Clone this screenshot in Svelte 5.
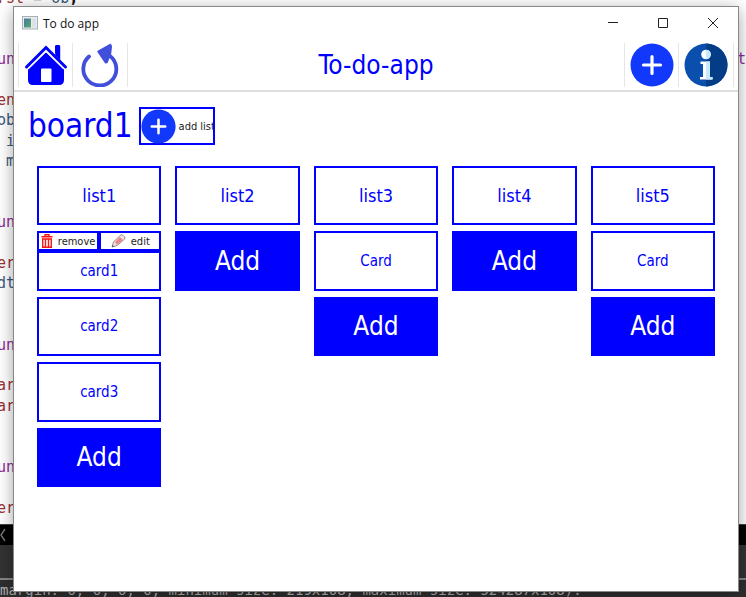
<script>
  const code = [
    { row: 1, text: 'rst = ob;', kind: 'mixed' },
    { row: 4, text: 'un', kind: 'keyword', tail: 't' },
    { row: 6, text: 'en', kind: 'name' },
    { row: 7, text: 'ob', kind: 'plain' },
    { row: 8, text: ' i', kind: 'plain' },
    { row: 9, text: ' m', kind: 'plain' },
    { row: 12, text: 'un', kind: 'keyword' },
    { row: 14, text: 'er', kind: 'name' },
    { row: 15, text: 'dt', kind: 'plain' },
    { row: 18, text: 'un', kind: 'keyword' },
    { row: 20, text: 'ar', kind: 'name' },
    { row: 21, text: 'ar', kind: 'name' },
    { row: 24, text: 'un', kind: 'keyword' },
    { row: 26, text: 'er', kind: 'name' }
  ];

  const lists = [
    { title: 'list1', cards: ['card1', 'card2', 'card3'] },
    { title: 'list2', cards: [] },
    { title: 'list3', cards: ['Card'] },
    { title: 'list4', cards: [] },
    { title: 'list5', cards: ['Card'] }
  ];

  let active = $state('card1');
</script>

{#snippet plus(size)}
  <svg width={size} height={size} viewBox="0 0 44 44" aria-hidden="true">
    <circle cx="22" cy="22" r="21.5" fill="#1238fb" />
    <path d="M22 13.500v17M13.500 22h17" stroke="#fff" stroke-width="3.2" stroke-linecap="round" />
  </svg>
{/snippet}

<div class="desktop">
  <div class="editor" aria-hidden="true">
    {#each code as line}
      <div class="line {line.kind}" style="grid-row: {line.row}">
        {#if line.kind === 'mixed'}
          <span><span class="name">rst</span> = ob<b>;</b></span>
        {:else}
          <span>{line.text}</span>
        {/if}
        {#if line.tail}<span>{line.tail}</span>{/if}
      </div>
    {/each}
  </div>
  <div class="scroll" aria-hidden="true">
    <svg width="6" height="16" viewBox="0 0 6 16"><path d="M5 2L1 8l4 6" fill="none" stroke="#777" stroke-width="1.4" /></svg>
  </div>
  <div class="gap"></div>
  <div class="console" aria-hidden="true">margin: 0, 0, 0, 0, minimum size: 219x108, maximum size: 524287x108).</div>

  <main class="window">
    <header class="titlebar">
      <svg width="16" height="14" viewBox="0 0 16 14" aria-hidden="true">
        <defs>
          <linearGradient id="screen" x1="0" y1="0" x2="1" y2="1">
            <stop offset="0" stop-color="#4a78a0" /><stop offset="1" stop-color="#55a86c" />
          </linearGradient>
        </defs>
        <rect x=".5" y=".5" width="15" height="12.5" fill="#e9edf0" stroke="#a9b0b5" />
        <rect x="2" y="2.5" width="7" height="9" fill="url(#screen)" />
        <rect x="10" y="2.5" width="4" height="9" fill="#dde2e5" />
      </svg>
      <span>To do app</span>
      <div class="controls">
        <button aria-label="Minimize"><svg width="12" height="12" viewBox="0 0 12 12"><path d="M1 5.5h10" /></svg></button>
        <button aria-label="Maximize"><svg width="12" height="12" viewBox="0 0 12 12"><path d="M1.5 1.5h9v9h-9z" /></svg></button>
        <button aria-label="Close"><svg width="12" height="12" viewBox="0 0 12 12"><path d="M1 1l10 10M11 1L1 11" /></svg></button>
      </div>
    </header>

    <nav class="toolbar">
      <button class="tool" aria-label="Home">
        <svg width="44" height="44" viewBox="0 0 44 44">
          <path d="M4 39V26.500L22 9l18 17.500V37q0 5-5 5H9q-5 0-5-5z" fill="#0000fe" />
          <path d="M31 13V3.500q0-1.500 1.500-1.500h2q1.500 0 1.500 1.500V17z" fill="#0000fe" />
          <path d="M2.500 24L22 5l19.500 19" fill="none" stroke="#fff" stroke-width="6" />
          <path d="M2.500 24L22 4.500 41.500 24" fill="none" stroke="#0000fe" stroke-width="3" stroke-linecap="round" />
          <path d="M31.200 12V3.500q0-1.500 1.500-1.500h2q1.500 0 1.500 1.500V17z" fill="#0000fe" />
          <rect x="17" y="25.500" width="10.500" height="13.500" rx="1" fill="#fff" />
        </svg>
      </button>
      <button class="tool" aria-label="Refresh">
        <svg width="44" height="44" viewBox="0 0 44 44">
          <path d="M11 13.500A16.500 16.500 0 1 0 32 13" fill="none" stroke="#424fdc" stroke-width="3.800" stroke-linecap="round" />
          <path d="M20 8.500L32.500 1.500l.8 2-.8 7-3.500 9-1.500.2z" fill="#424fdc" stroke="#424fdc" stroke-width="1.500" stroke-linejoin="round" />
        </svg>
      </button>
      <h1>To-do-app</h1>
      <button class="tool" aria-label="Add board">{@render plus(44)}</button>
      <button class="tool" aria-label="Information">
        <svg width="44" height="44" viewBox="0 0 44 44">
          <circle cx="22" cy="22" r="21.5" fill="#0a4fae" />
          <path d="M22 .5a21.500 21.500 0 0 1 0 43z" fill="#043c86" />
          <circle cx="22" cy="11.500" r="4.800" fill="#fff" />
          <path d="M22 6.700a4.800 4.800 0 0 1 0 9.600z" fill="#c8eaff" />
          <path d="M16.500 18.500H26V34h2.500v2.500H16V34h3V21h-2.500z" fill="#fff" />
          <path d="M22 18.500h4V34h2.500v2.500H22z" fill="#c8eaff" />
        </svg>
      </button>
    </nav>

    <section class="board">
      <div class="heading">
        <h2>board1</h2>
        <button class="add-list">{@render plus(35)}<span>add list</span></button>
      </div>
      <div class="lists">
        {#each lists as list}
          <div class="list">
            <button class="box title">{list.title}</button>
            {#each list.cards as card}
              {#if card === active}
                <div class="open">
                  <div class="actions">
                    <button>
                      <svg width="12" height="14" viewBox="0 0 12 14" aria-hidden="true">
                        <path d="M4 2V.8h4V2M.5 2.800h11M1.700 5v8.300h8.600V5zM4.500 5v8M7.500 5v8" fill="none" stroke="#fb1515" stroke-width="1.400" />
                      </svg>
                      <span>remove</span>
                    </button>
                    <button>
                      <svg width="15" height="14" viewBox="0 0 15 14" aria-hidden="true">
                        <path d="M1 13l1.500-5L9 1.500Q10.500 0 12 1.300l1.500 1.500q1 1.200 0 2.400L6 11.500z" fill="#f1e4e4" stroke="#8f8080" stroke-width=".9" />
                        <path d="M3.800 8.300l5-5.200 3 2.700-5.500 5z" fill="#ea858b" />
                        <path d="M1 13l.6-2 1.400 1.300z" fill="#444" />
                      </svg>
                      <span>edit</span>
                    </button>
                  </div>
                  <button class="box card">{card}</button>
                </div>
              {:else}
                <button class="box card" onclick={() => (active = card)}>{card}</button>
              {/if}
            {/each}
            <button class="box add">Add</button>
          </div>
        {/each}
      </div>
    </section>
  </main>
</div>

<style>
  :global(body) { margin: 0; }
  * { box-sizing: border-box; }
  .desktop {
    position: relative;
    display: flex;
    flex-direction: column;
    height: 100vh;
    overflow: hidden;
    background: #2f2f2f;
  }
  button {
    margin: 0;
    padding: 0;
    border: 0;
    background: none;
    color: inherit;
    font: inherit;
    cursor: pointer;
  }
  svg { display: block; flex: none; }

  .editor {
    display: grid;
    grid-template-rows: repeat(26, 1fr);
    flex: none;
    height: 536px;
    margin-top: -12px;
    padding-bottom: 6px;
    background: #fff;
    font: 15px/20px "DejaVu Sans Mono", monospace;
    color: #3d5a80;
    white-space: pre;
  }
  .line { display: flex; justify-content: space-between; margin-left: -3px; min-height: 0; }
  .keyword { color: #8f2f9b; }
  .name { color: #9b3034; }
  .line b { color: #111; }
  .scroll {
    flex: none;
    display: flex;
    align-items: center;
    height: 21px;
    border-top: 1px solid #444;
    background: #000;
  }
  .gap { flex: none; height: 35px; background: #333; border-bottom: 2px solid #858585; }
  .console {
    flex: 1;
    font: 14px/20px "DejaVu Sans Mono", monospace;
    color: #b4b4b4;
    white-space: nowrap;
    overflow: hidden;
  }

  .window {
    position: absolute;
    inset: 7px 8px 6px 14px;
    display: flex;
    flex-direction: column;
    background: #fff;
    color: #00f;
    font-family: "DejaVu Sans Condensed", "DejaVu Sans", sans-serif;
    font-stretch: condensed;
    box-shadow: 0 0 0 1px #888, 0 3px 16px rgba(0, 0, 0, .4);
  }
  .titlebar {
    display: flex;
    align-items: center;
    gap: 5px;
    height: 32px;
    padding-left: 8px;
    color: #111;
    font: 12px "Open Sans", "Noto Sans", sans-serif;
  }
  .controls { display: flex; margin-left: auto; }
  .controls button { display: grid; place-items: center; width: 50px; height: 32px; }
  .controls path { fill: none; stroke: #222; stroke-width: 1; }

  .toolbar {
    display: flex;
    align-items: center;
    height: 53px;
    padding: 0 4px;
    border-bottom: 2px solid #dedede;
  }
  .tool {
    display: grid;
    place-items: center;
    width: 55px;
    height: 44px;
    border: solid #e6e6e6;
    border-width: 0 1px 0 0;
  }
  .tool:first-child, h1 + .tool { border-left-width: 1px; }
  h1 { flex: 1; margin: 0; text-align: center; font-size: 26px; line-height: 32px; font-weight: 400; }

  .board { padding: 15px 23px 0; }
  .heading { display: flex; align-items: center; gap: 6px; margin-left: -9px; }
  h2 { margin: 0; font-size: 33px; line-height: 38px; font-weight: 400; }
  .add-list {
    display: flex;
    align-items: center;
    gap: 3px;
    width: 76px;
    height: 38px;
    border: 2px solid #00f;
    color: #222;
    font-size: 11px;
    white-space: nowrap;
  }
  .lists { display: grid; grid-template-columns: repeat(5, 1fr); gap: 14px; margin-top: 21px; }
  .list { display: grid; grid-template-rows: repeat(5, 1fr); gap: 6px; height: 321px; }
  .box { border: 2px solid #00f; background: #fff; min-height: 0; }
  .title { font-size: 18px; }
  .card { font-size: 15px; }
  .add { background: #00f; color: #fff; font-size: 26px; }
  .open { display: flex; flex-direction: column; min-height: 0; }
  .open .card { flex: 1; }
  .actions { display: grid; grid-template-columns: 1fr 1fr; height: 20px; }
  .actions button {
    display: flex;
    align-items: center;
    justify-content: center;
    gap: 5px;
    border: 2px solid #00f;
    color: #222;
    font-size: 11px;
  }
</style>
